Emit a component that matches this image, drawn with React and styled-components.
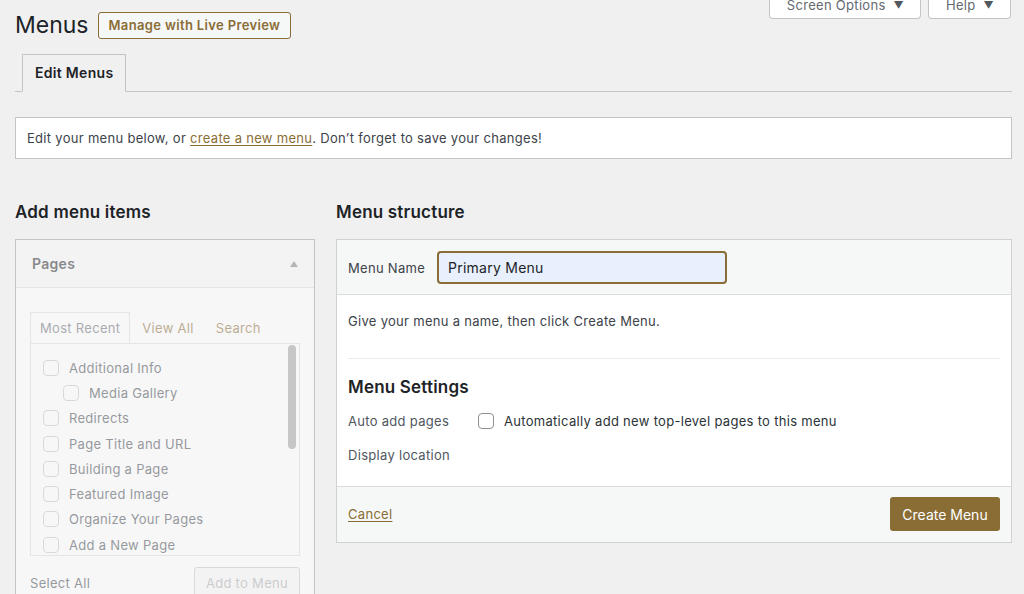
import styled, { createGlobalStyle } from 'styled-components'

const GlobalStyle = createGlobalStyle`
  body {
    margin: 0;
    background: #f0f0f1;
    font-family: Inter, "Liberation Sans", sans-serif;
    font-size: 13px;
    letter-spacing: 0.3px;
    color: #3c434a;
    overflow: hidden;
  }
`

const brown = '#8a6d35'

const pages = [
  { title: 'Additional Info', depth: 0 },
  { title: 'Media Gallery', depth: 1 },
  { title: 'Redirects', depth: 0 },
  { title: 'Page Title and URL', depth: 0 },
  { title: 'Building a Page', depth: 0 },
  { title: 'Featured Image', depth: 0 },
  { title: 'Organize Your Pages', depth: 0 },
  { title: 'Add a New Page', depth: 0 },
  { title: 'Sample Page', depth: 0 }
]

function Caret () {
  return (
    <svg width='8' height='6' viewBox='0 0 8 6'>
      <path d='M0 6 L4 0 L8 6 Z' fill='currentColor' />
    </svg>
  )
}

function App () {
  return (
    <>
      <GlobalStyle />
      <Wrap>
        <Top>
          <TitleRow>
            <Title>Menus</Title>
            <PreviewButton>Manage with Live Preview</PreviewButton>
          </TitleRow>
          <MetaLinks>
            <MetaButton>Screen Options <Arrow>▼</Arrow></MetaButton>
            <MetaButton>Help <Arrow>▼</Arrow></MetaButton>
          </MetaLinks>
        </Top>

        <TabBar>
          <Tab>Edit Menus</Tab>
        </TabBar>

        <Notice>
          Edit your menu below, or <Link href='#'>create a new menu</Link>. Don’t forget to save your changes!
        </Notice>

        <Columns>
          <div>
            <SectionTitle>Add menu items</SectionTitle>
            <SidePanel>
              <Faded>
                <PanelHead>
                  Pages
                  <CaretWrap><Caret /></CaretWrap>
                </PanelHead>
                <PanelBody>
                  <InnerTabs>
                    <InnerTab $active>Most Recent</InnerTab>
                    <InnerTab>View All</InnerTab>
                    <InnerTab>Search</InnerTab>
                  </InnerTabs>
                  <PageList>
                    {pages.map(p => (
                      <PageItem key={p.title} $depth={p.depth}>
                        <Check />
                        {p.title}
                      </PageItem>
                    ))}
                    <Scrollbar />
                  </PageList>
                  <ListActions>
                    <span>Select All</span>
                    <AddButton>Add to Menu</AddButton>
                  </ListActions>
                </PanelBody>
              </Faded>
            </SidePanel>
          </div>

          <div>
            <SectionTitle>Menu structure</SectionTitle>
            <EditPanel>
              <EditHead>
                <NameLabel>Menu Name</NameLabel>
                <NameInput defaultValue='Primary Menu' />
              </EditHead>
              <EditBody>
                <Hint>Give your menu a name, then click Create Menu.</Hint>
                <Divider />
                <SettingsTitle>Menu Settings</SettingsTitle>
                <SettingRow>
                  <SettingLabel>Auto add pages</SettingLabel>
                  <Check $strong />
                  <SettingText>Automatically add new top-level pages to this menu</SettingText>
                </SettingRow>
                <SettingRow>
                  <SettingLabel>Display location</SettingLabel>
                </SettingRow>
              </EditBody>
              <EditFoot>
                <Link href='#'>Cancel</Link>
                <PrimaryButton>Create Menu</PrimaryButton>
              </EditFoot>
            </EditPanel>
          </div>
        </Columns>
      </Wrap>
    </>
  )
}

const Wrap = styled.div`
  padding: 0 12px 0 15px;
`

const Top = styled.div`
  display: flex;
  justify-content: space-between;
  align-items: flex-start;
`

const TitleRow = styled.div`
  display: flex;
  align-items: center;
  gap: 9px;
  padding-top: 10px;
`

const Title = styled.h1`
  margin: 0;
  font-size: 23px;
  font-weight: 400;
  line-height: 30px;
  letter-spacing: 0;
  color: #1d2327;
`

const PreviewButton = styled.button`
  height: 27px;
  padding: 0 10px;
  border: 1px solid ${brown};
  border-radius: 3px;
  background: #f6f7f7;
  color: ${brown};
  font-family: inherit;
  font-size: 13px;
  font-weight: 600;
  letter-spacing: 0.35px;
`

const MetaLinks = styled.div`
  display: flex;
  gap: 7px;
  padding-right: 1px;
`

const MetaButton = styled.div`
  height: 19px;
  box-sizing: border-box;
  display: flex;
  align-items: flex-end;
  gap: 8px;
  padding: 0 16px 6px 17px;
  background: #fff;
  border: 1px solid #c3c4c7;
  border-top: none;
  border-radius: 0 0 4px 4px;
  color: #646970;
  font-size: 13px;
  line-height: 13px;
  overflow: hidden;
`

const Arrow = styled.span`
  font-size: 10px;
  line-height: 13px;
  color: #50575e;
`

const TabBar = styled.div`
  display: flex;
  margin-top: 14px;
  padding-left: 7px;
  border-bottom: 1px solid #c3c4c7;
`

const Tab = styled.div`
  position: relative;
  margin-bottom: -1px;
  padding: 0 12px;
  line-height: 36px;
  border: 1px solid #c3c4c7;
  border-bottom-color: #f0f0f1;
  background: #f0f0f1;
  color: #1d2327;
  font-size: 14px;
  font-weight: 600;
`

const Notice = styled.div`
  margin-top: 25px;
  padding: 1px 11px 0;
  line-height: 39px;
  background: #fff;
  border: 1px solid #c3c4c7;
`

const Link = styled.a`
  color: ${brown};
  text-decoration: underline;
  text-underline-offset: 2px;
`

const Columns = styled.div`
  display: grid;
  grid-template-columns: 300px 1fr;
  gap: 21px;
  margin-top: 41px;
`

const SectionTitle = styled.h2`
  margin: 0 0 15px;
  font-size: 17px;
  font-weight: 600;
  line-height: 24px;
  letter-spacing: 0.2px;
  color: #1d2327;
`

const SidePanel = styled.div`
  border: 1px solid #c3c4c7;
  background: #f0f0f1;
  height: 400px;
`

const Faded = styled.div`
  opacity: 0.5;
  background: #fff;
  height: 100%;
`

const PanelHead = styled.div`
  display: flex;
  justify-content: space-between;
  align-items: center;
  height: 47px;
  padding: 0 16px;
  background: #f6f7f7;
  border-bottom: 1px solid #dcdcde;
  color: #1d2327;
  font-size: 14px;
  font-weight: 600;
`

const CaretWrap = styled.span`
  display: flex;
  color: #787c82;
`

const PanelBody = styled.div`
  padding: 24px 14px 0;
`

const InnerTabs = styled.div`
  display: flex;
`

const InnerTab = styled.div`
  position: relative;
  margin-bottom: -1px;
  padding: 0 ${p => (p.$active ? '9px' : '10px')};
  margin-right: ${p => (p.$active ? '1px' : '0')};
  line-height: 30px;
  border: 1px solid ${p => (p.$active ? '#dcdcde' : 'transparent')};
  border-bottom-color: ${p => (p.$active ? '#fff' : 'transparent')};
  background: ${p => (p.$active ? '#fff' : 'transparent')};
  color: ${p => (p.$active ? '#646970' : brown)};
`

const PageList = styled.div`
  position: relative;
  height: 200px;
  padding: 11px 12px 0;
  border: 1px solid #dcdcde;
  background: #fff;
  overflow: hidden;
`

const PageItem = styled.div`
  display: flex;
  align-items: center;
  gap: 10px;
  height: 25.3px;
  padding-left: ${p => p.$depth * 20}px;
  color: #3c434a;
`

const Check = styled.span`
  flex: none;
  width: 16px;
  height: 16px;
  box-sizing: border-box;
  border: 1px solid ${p => (p.$strong ? '#8c8f94' : '#c3c4c7')};
  border-radius: 4px;
  background: #fff;
`

const Scrollbar = styled.div`
  position: absolute;
  top: 1px;
  right: 3px;
  width: 8px;
  height: 104px;
  border-radius: 4px;
  background: #a0a0a0;
`

const ListActions = styled.div`
  display: flex;
  justify-content: space-between;
  align-items: center;
  margin-top: 11px;
  color: #3c434a;
`

const AddButton = styled.div`
  height: 32px;
  box-sizing: border-box;
  padding: 0 11px;
  line-height: 30px;
  border: 1px solid #c3c4c7;
  border-radius: 3px;
  background: #f6f7f7;
  color: #a7aaad;
`

const EditPanel = styled.div`
  border: 1px solid #d0d1d3;
  background: #fff;
`

const EditHead = styled.div`
  display: flex;
  align-items: center;
  padding: 11px 11px 10px;
  background: #f6f7f7;
  border-bottom: 1px solid #dcdcde;
`

const NameLabel = styled.label`
  width: 89px;
  color: #3c434a;
`

const NameInput = styled.input`
  width: 290px;
  height: 33px;
  box-sizing: border-box;
  padding: 0 9px;
  border: 2px solid ${brown};
  border-radius: 4px;
  background: #e8f0fe;
  color: #1d2327;
  font-family: inherit;
  font-size: 14px;
  letter-spacing: 0.25px;
  outline: none;
`

const EditBody = styled.div`
  padding: 17px 11px 18px;
`

const Hint = styled.p`
  margin: 0;
  line-height: 19px;
`

const Divider = styled.hr`
  margin: 27px 0 0;
  border: none;
  border-top: 1px solid #ebebec;
`

const SettingsTitle = styled.h3`
  margin: 16px 0 9px;
  font-size: 17px;
  font-weight: 600;
  line-height: 24px;
  letter-spacing: 0.2px;
  color: #1d2327;
`

const SettingRow = styled.div`
  display: flex;
  align-items: center;
  height: 26px;
  & + & {
    margin-top: 8px;
  }
`

const SettingLabel = styled.span`
  width: 130px;
  color: #50575e;
`

const SettingText = styled.span`
  margin-left: 10px;
  color: #2c3338;
`

const EditFoot = styled.div`
  display: flex;
  justify-content: space-between;
  align-items: center;
  padding: 10px 11px 11px;
  background: #f6f7f7;
  border-top: 1px solid #dcdcde;
`

const PrimaryButton = styled.button`
  width: 110px;
  height: 34px;
  border: none;
  border-radius: 3px;
  background: ${brown};
  color: #fff;
  font-family: inherit;
  font-size: 14px;
  letter-spacing: 0;
`

export default App
